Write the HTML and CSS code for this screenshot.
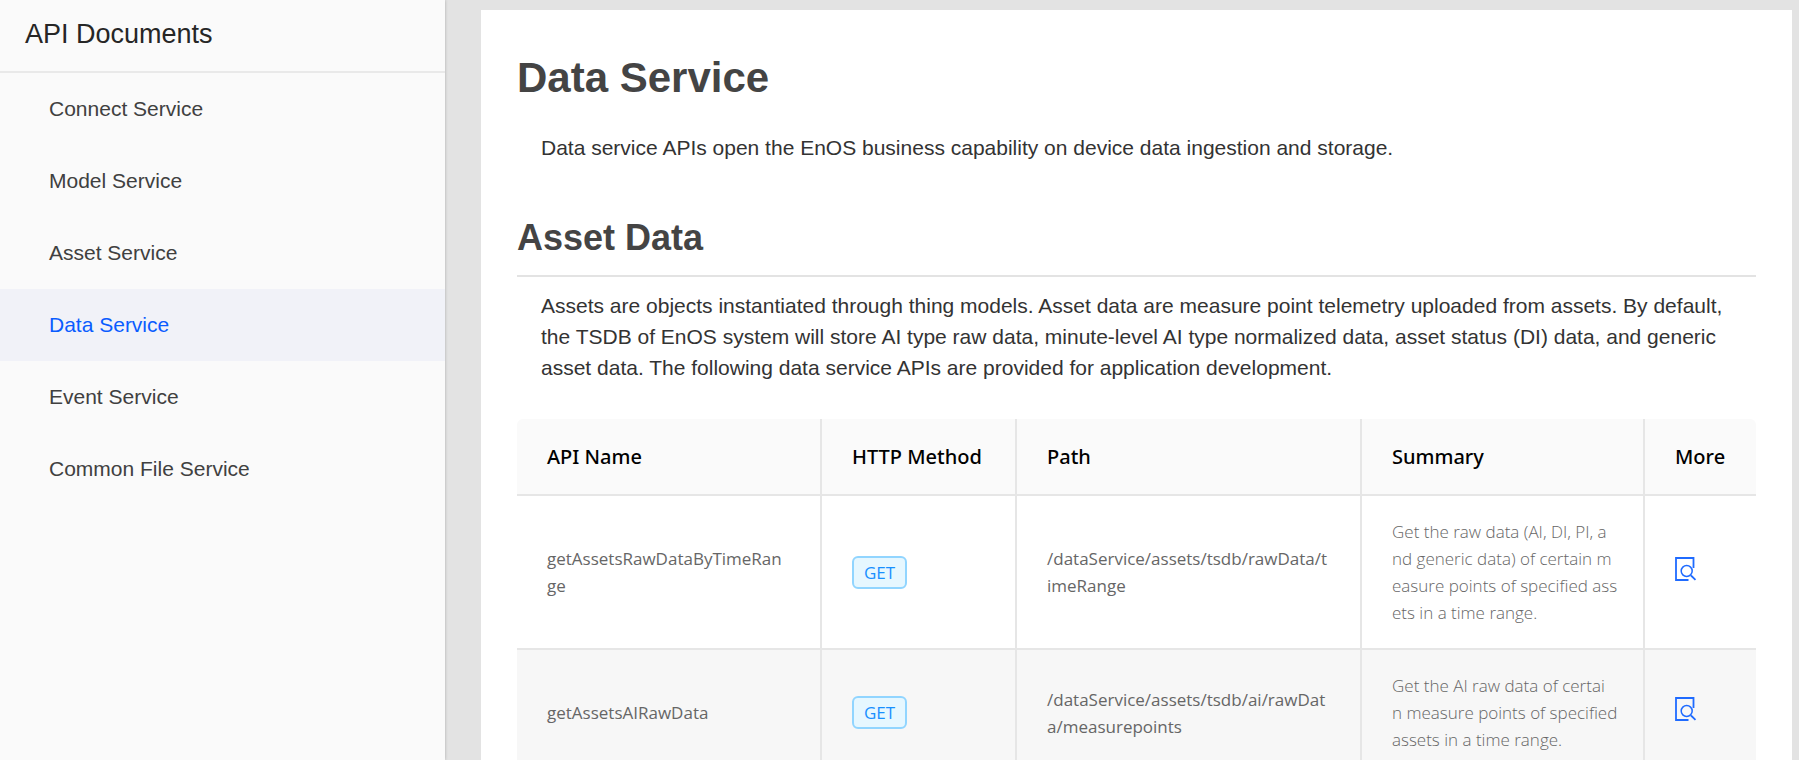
FILE: index.html
```html
<!DOCTYPE html>
<html lang="en">
<head>
<meta charset="utf-8">
<title>API Documents</title>
<link rel="stylesheet" href="styles.css">
</head>
<body>
<svg class="sprite" aria-hidden="true">
  <symbol id="detail" viewBox="0 0 22 24">
    <path d="M18.500 11V1H1v22h12.500M16 18.500l4.500 4.300" fill="none" stroke="currentColor" stroke-width="1.800"/>
    <circle cx="11.700" cy="14" r="5.500" fill="none" stroke="currentColor" stroke-width="1.500"/>
  </symbol>
</svg>
<div class="app">
  <aside class="sidebar">
    <div class="sidebar-title">API Documents</div>
    <nav class="menu">
      <a class="menu-item" href="#connect">Connect Service</a>
      <a class="menu-item" href="#model">Model Service</a>
      <a class="menu-item" href="#asset">Asset Service</a>
      <a class="menu-item active" href="#data" aria-current="page">Data Service</a>
      <a class="menu-item" href="#event">Event Service</a>
      <a class="menu-item" href="#file">Common File Service</a>
    </nav>
  </aside>
  <main class="content">
    <article class="card">
      <h1 class="title">Data Service</h1>
      <p class="text">Data service APIs open the EnOS business capability on device data ingestion and storage.</p>
      <h2 class="section-title">Asset Data</h2>
      <p class="text">Assets are objects instantiated through thing models. Asset data are measure point telemetry uploaded from assets. By default, the TSDB of EnOS system will store AI type raw data, minute-level AI type normalized data, asset status (DI) data, and generic asset data. The following data service APIs are provided for application development.</p>
      <table class="api-table">
        <colgroup><col class="col-name"><col class="col-method"><col class="col-path"><col class="col-summary"><col class="col-more"></colgroup>
        <thead>
          <tr><th>API Name</th><th>HTTP Method</th><th>Path</th><th>Summary</th><th>More</th></tr>
        </thead>
        <tbody>
          <tr>
            <td>getAssetsRawDataByTimeRan<wbr>ge</td>
            <td><span class="tag">GET</span></td>
            <td>/dataService/assets/tsdb/rawData/t<wbr>imeRange</td>
            <td class="summary">Get the raw data (AI, DI, PI, a<br>nd generic data) of certain m<br>easure points of specified ass<br>ets in a time range.</td>
            <td><a class="more" href="#time-range" aria-label="Details"><svg class="icon"><use href="#detail"/></svg></a></td>
          </tr>
          <tr>
            <td>getAssetsAIRawData</td>
            <td><span class="tag">GET</span></td>
            <td>/dataService/assets/tsdb/ai/rawDat<wbr>a/measurepoints</td>
            <td class="summary">Get the AI raw data of certai<br>n measure points of specified<br>assets in a time range.</td>
            <td><a class="more" href="#ai-raw" aria-label="Details"><svg class="icon"><use href="#detail"/></svg></a></td>
          </tr>
        </tbody>
      </table>
    </article>
  </main>
</div>
</body>
</html>
```

FILE: styles.css
```css
* { box-sizing: border-box; }
body {
  margin: 0;
  background: #e3e3e3;
  color: #333;
  font-family: "Liberation Sans", Arial, sans-serif;
  font-size: 21px;
}
.sprite { display: none; }
.app { display: flex; height: 100vh; }
.sidebar {
  flex: none;
  width: 445px;
  background: #fafafa;
  box-shadow: 0 0 3px rgba(0, 0, 0, 0.25);
}
.sidebar-title {
  padding: 14px 25px 17px;
  border-bottom: 2px solid #e9e9e9;
  color: #262626;
  font-size: 27px;
  line-height: 40px;
}
.menu { display: flex; flex-direction: column; }
.menu-item {
  padding: 0 49px;
  color: #404040;
  line-height: 72px;
  text-decoration: none;
}
.menu-item.active { background: #f1f2f8; color: #0a5cff; }
.content {
  flex: 1;
  min-width: 0;
  padding: 10px 7px 0 36px;
  overflow-y: auto;
  scrollbar-width: none;
}
.card { padding: 43px 36px 36px; background: #fff; }
.title {
  margin: 0 0 29px;
  color: #444;
  font-size: 42px;
  line-height: 50px;
}
.text { margin: 0; padding: 0 24px; line-height: 31px; }
.section-title {
  margin: 53px 0 13px;
  padding-bottom: 15px;
  border-bottom: 2px solid #e3e3e3;
  color: #444;
  font-size: 36px;
  line-height: 44px;
}
.api-table {
  width: 100%;
  margin-top: 36px;
  border-collapse: separate;
  border-spacing: 0;
  table-layout: fixed;
  font-family: "Open Sans", "Noto Sans", sans-serif;
}
.col-name { width: 305px; }
.col-method { width: 195px; }
.col-summary { width: 283px; }
.col-more { width: 111px; }
.api-table th,
.api-table td {
  padding: 22px 30px;
  border-right: 2px solid #e6e6e6;
  border-bottom: 2px solid #e6e6e6;
  text-align: left;
  white-space: nowrap;
}
.api-table th:last-child,
.api-table td:last-child { border-right: 0; }
.api-table th {
  background: #fafafa;
  color: #000;
  font-family: "Noto Sans", "Open Sans", sans-serif;
  font-size: 20px;
  font-weight: 500;
  line-height: 31px;
}
.api-table th:first-child { border-top-left-radius: 6px; }
.api-table th:last-child { border-top-right-radius: 6px; }
.api-table td {
  color: #666;
  font-size: 17px;
  line-height: 27px;
  white-space: normal;
}
.api-table .summary { font-weight: 300; white-space: nowrap; }
.api-table tbody tr:nth-child(even) { background: #f7f7f7; }
.tag {
  display: block;
  width: 55px;
  border: 2px solid #91d5ff;
  border-radius: 6px;
  background: #e6f7ff;
  color: #1890ff;
  line-height: 29px;
  text-align: center;
}
.more { color: #1f6bff; }
.icon { width: 22px; height: 24px; }
```
